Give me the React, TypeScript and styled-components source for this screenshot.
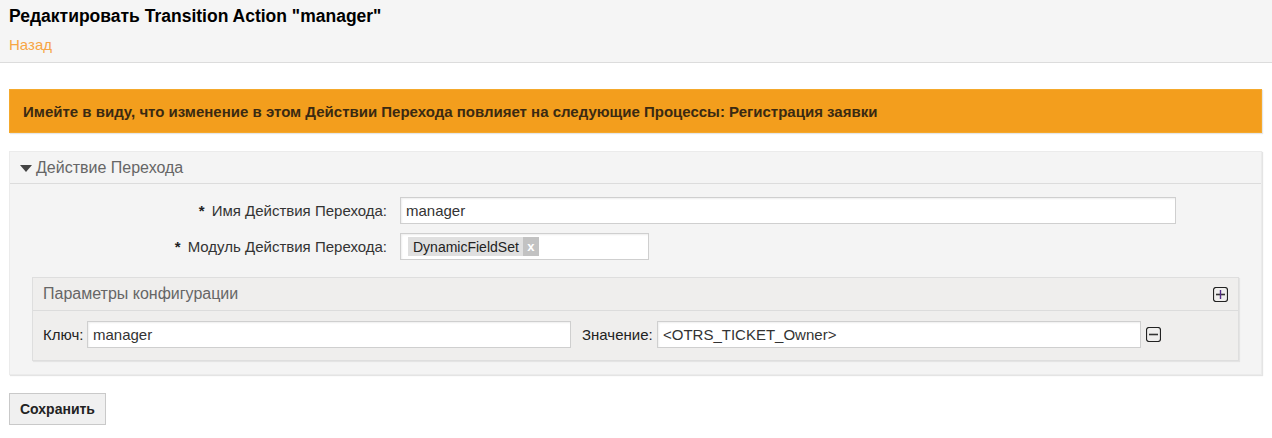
import styled, { createGlobalStyle } from 'styled-components';

const GlobalStyle = createGlobalStyle`
  html, body {
    margin: 0;
    padding: 0;
    background: #fff;
    font-family: 'Liberation Sans', Arial, sans-serif;
    color: #333;
  }
`;

const Page = styled.div`
  width: 1272px;
  min-height: 438px;
`;

const Header = styled.div`
  background: #f5f5f5;
  border-bottom: 1px solid #dcdcdc;
  height: 63px;
  box-sizing: border-box;
  padding: 6px 9px 0;
`;

const Title = styled.h1`
  margin: 0;
  font-size: 17.5px;
  font-weight: bold;
  color: #000;
  line-height: 20px;
`;

const BackLink = styled.a`
  display: block;
  margin-top: 10px;
  font-size: 15px;
  color: #f7a545;
  text-decoration: none;
`;

const Content = styled.div`
  padding: 26px 10px 0 9px;
`;

const Notice = styled.div`
  background: #f39e1d;
  border: 1px solid #f5a92c;
  box-shadow: 1px 1px 1px #e6e6e6;
  height: 44px;
  box-sizing: border-box;
  display: flex;
  align-items: center;
  padding: 0 13px;
  font-size: 15px;
  font-weight: bold;
  color: #3a2a12;
`;

const Widget = styled.div<{ $inner?: boolean }>`
  margin-top: ${({ $inner }) => ($inner ? '17px' : '18px')};
  background: ${({ $inner }) => ($inner ? '#efeeed' : '#f4f4f4')};
  border: 1px solid ${({ $inner }) => ($inner ? '#dedede' : '#ebebeb')};
  box-shadow: 1px 1px 1px #e4e4e4;
`;

const WidgetHeader = styled.div<{ $inner?: boolean }>`
  height: ${({ $inner }) => ($inner ? '33px' : '32px')};
  box-sizing: border-box;
  border-bottom: 1px solid #dcdcdc;
  display: flex;
  align-items: center;
  padding: 0 10px;
  font-size: 16px;
  color: #666;
  justify-content: space-between;
`;

const HeaderTitle = styled.span`
  display: flex;
  align-items: center;
  gap: 4px;
`;

const Triangle = styled.span`
  width: 0;
  height: 0;
  border-left: 6px solid transparent;
  border-right: 6px solid transparent;
  border-top: 7px solid #444;
  margin-top: 1px;
`;

const WidgetBody = styled.div`
  padding: 13px 22px 13px;
`;

const FieldRow = styled.div`
  display: flex;
  align-items: center;
  margin-bottom: 9px;
`;

const Label = styled.label`
  width: 368px;
  box-sizing: border-box;
  padding-right: 13px;
  text-align: right;
  font-size: 15px;
  color: #333;
`;

const Star = styled.span`
  font-weight: bold;
  margin-right: 7px;
  color: #222;
`;

const TextInput = styled.div<{ $w: number }>`
  width: ${({ $w }) => $w}px;
  height: 27px;
  box-sizing: border-box;
  background: #fff;
  border: 1px solid #cfcfcf;
  box-shadow: inset 1px 1px 2px #eee;
  font-size: 15px;
  color: #333;
  display: flex;
  align-items: center;
  padding: 0 5px;
`;

const Tag = styled.span`
  display: inline-flex;
  align-items: center;
  background: #e0e0e0;
  font-size: 14px;
  color: #222;
  height: 19px;
  padding-left: 5px;
  margin-left: 2px;
`;

const TagRemove = styled.span`
  background: #c2c2c2;
  color: #fff;
  width: 16px;
  height: 19px;
  margin-left: 4px;
  display: inline-flex;
  align-items: center;
  justify-content: center;
  font-size: 13px;
  font-weight: bold;
`;

const InnerBody = styled.div`
  display: flex;
  align-items: center;
  padding: 10px 0 12px 10px;
  font-size: 15px;
`;

const PairLabel = styled.span<{ $w: number; $gap?: number }>`
  width: ${({ $w }) => $w}px;
  margin-left: ${({ $gap }) => $gap ?? 0}px;
  color: #222;
`;

const IconButton = styled.span`
  display: inline-flex;
  margin-left: 5px;
`;

const SaveButton = styled.button`
  display: block;
  margin: 18px 0 0 0;
  height: 32px;
  padding: 0 10px;
  background: #f0f0f0;
  border: 1px solid #c9c9c9;
  font-family: 'Liberation Sans', Arial, sans-serif;
  font-size: 14px;
  font-weight: bold;
  color: #222;
`;

const BoxIcon = ({ plus }: { plus?: boolean }) => (
  <svg width="15" height="15" viewBox="0 0 15 15">
    <rect x="0.5" y="0.5" width="14" height="14" rx="2.5" fill="none" stroke="#222" strokeWidth="1.2" />
    <line x1="3" y1="7.5" x2="12" y2="7.5" stroke="#333" strokeWidth="1.6" />
    {plus ? <line x1="7.5" y1="3" x2="7.5" y2="12" stroke="#552a8a" strokeWidth="1.4" /> : null}
  </svg>
);

const App = () => (
  <Page>
    <GlobalStyle />
    <Header>
      <Title>Редактировать Transition Action "manager"</Title>
      <BackLink>Назад</BackLink>
    </Header>
    <Content>
      <Notice>
        Имейте в виду, что изменение в этом Действии Перехода повлияет на следующие Процессы: Регистрация заявки
      </Notice>
      <Widget>
        <WidgetHeader>
          <HeaderTitle>
            <Triangle />
            Действие Перехода
          </HeaderTitle>
        </WidgetHeader>
        <WidgetBody>
          <FieldRow>
            <Label>
              <Star>*</Star>Имя Действия Перехода:
            </Label>
            <TextInput $w={776}>manager</TextInput>
          </FieldRow>
          <FieldRow>
            <Label>
              <Star>*</Star>Модуль Действия Перехода:
            </Label>
            <TextInput $w={249}>
              <Tag>
                DynamicFieldSet<TagRemove>x</TagRemove>
              </Tag>
            </TextInput>
          </FieldRow>
          <Widget $inner>
            <WidgetHeader $inner>
              <span>Параметры конфигурации</span>
              <BoxIcon plus />
            </WidgetHeader>
            <InnerBody>
              <PairLabel $w={44}>Ключ:</PairLabel>
              <TextInput $w={484}>manager</TextInput>
              <PairLabel $w={75} $gap={11}>
                Значение:
              </PairLabel>
              <TextInput $w={484}>&lt;OTRS_TICKET_Owner&gt;</TextInput>
              <IconButton>
                <BoxIcon />
              </IconButton>
            </InnerBody>
          </Widget>
        </WidgetBody>
      </Widget>
      <SaveButton>Сохранить</SaveButton>
    </Content>
  </Page>
);

export default App;
